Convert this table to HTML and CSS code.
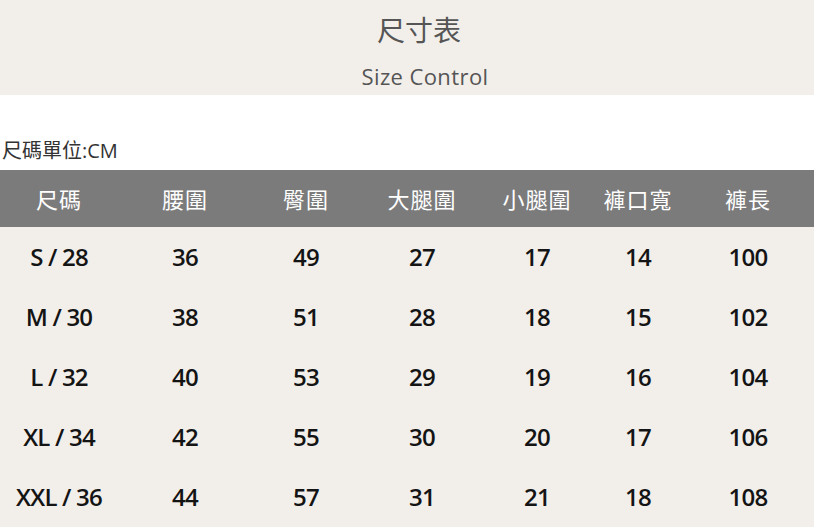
FILE: index.html
```html
<!DOCTYPE html>
<html lang="zh-Hant">
<head>
<meta charset="utf-8">
<title>尺寸表</title>
<link rel="stylesheet" href="styles.css">
</head>
<body>
<header class="band">
  <div class="title">尺寸表</div>
  <div class="subtitle">Size Control</div>
</header>
<div class="unit">尺碼單位:CM</div>
<div class="table">
  <div class="row head">
    <div>尺碼</div><div>腰圍</div><div>臀圍</div><div>大腿圍</div><div>小腿圍</div><div>褲口寬</div><div>褲長</div>
  </div>
  <div class="row"><div>S / 28</div><div>36</div><div>49</div><div>27</div><div>17</div><div>14</div><div>100</div></div>
  <div class="row"><div>M / 30</div><div>38</div><div>51</div><div>28</div><div>18</div><div>15</div><div>102</div></div>
  <div class="row"><div>L / 32</div><div>40</div><div>53</div><div>29</div><div>19</div><div>16</div><div>104</div></div>
  <div class="row"><div>XL / 34</div><div>42</div><div>55</div><div>30</div><div>20</div><div>17</div><div>106</div></div>
  <div class="row"><div>XXL / 36</div><div>44</div><div>57</div><div>31</div><div>21</div><div>18</div><div>108</div></div>
</div>
</body>
</html>
```

FILE: styles.css
```css
html, body {
  margin: 0;
  padding: 0;
  background: #ffffff;
}
body {
  font-family: "Open Sans", "Noto Sans CJK TC", sans-serif;
  overflow: hidden;
}
.band {
  background: #f2efeb;
  height: 95px;
  display: flex;
  flex-direction: column;
  align-items: center;
  color: #555555;
}
.title {
  font-family: "Noto Sans CJK TC", sans-serif;
  font-size: 28px;
  line-height: 58px;
  padding-left: 24px;
}
.subtitle {
  font-family: "Open Sans", sans-serif;
  font-size: 22px;
  font-weight: 500;
  line-height: 37px;
  padding-left: 36px;
  letter-spacing: 0.4px;
}
.unit {
  font-family: "Open Sans", "Noto Sans CJK TC", sans-serif;
  font-size: 20px;
  line-height: 20px;
  padding: 46px 0 9px 2px;
  color: #333333;
  letter-spacing: 0;
}
.table {
  background: #f2efeb;
}
.row {
  display: grid;
  grid-template-columns: 118px 134px 108px 124px 106px 96px 124px;
  height: 60px;
  line-height: 60px;
  text-align: center;
  font-size: 24px;
  font-weight: 600;
  color: #141414;
  letter-spacing: -0.8px;
}
.row.head {
  background: #7b7b7b;
  height: 57px;
  line-height: 57px;
  font-family: "Noto Sans CJK TC", sans-serif;
  font-size: 22px;
  font-weight: 400;
  color: #ffffff;
  letter-spacing: 1px;
}
```
